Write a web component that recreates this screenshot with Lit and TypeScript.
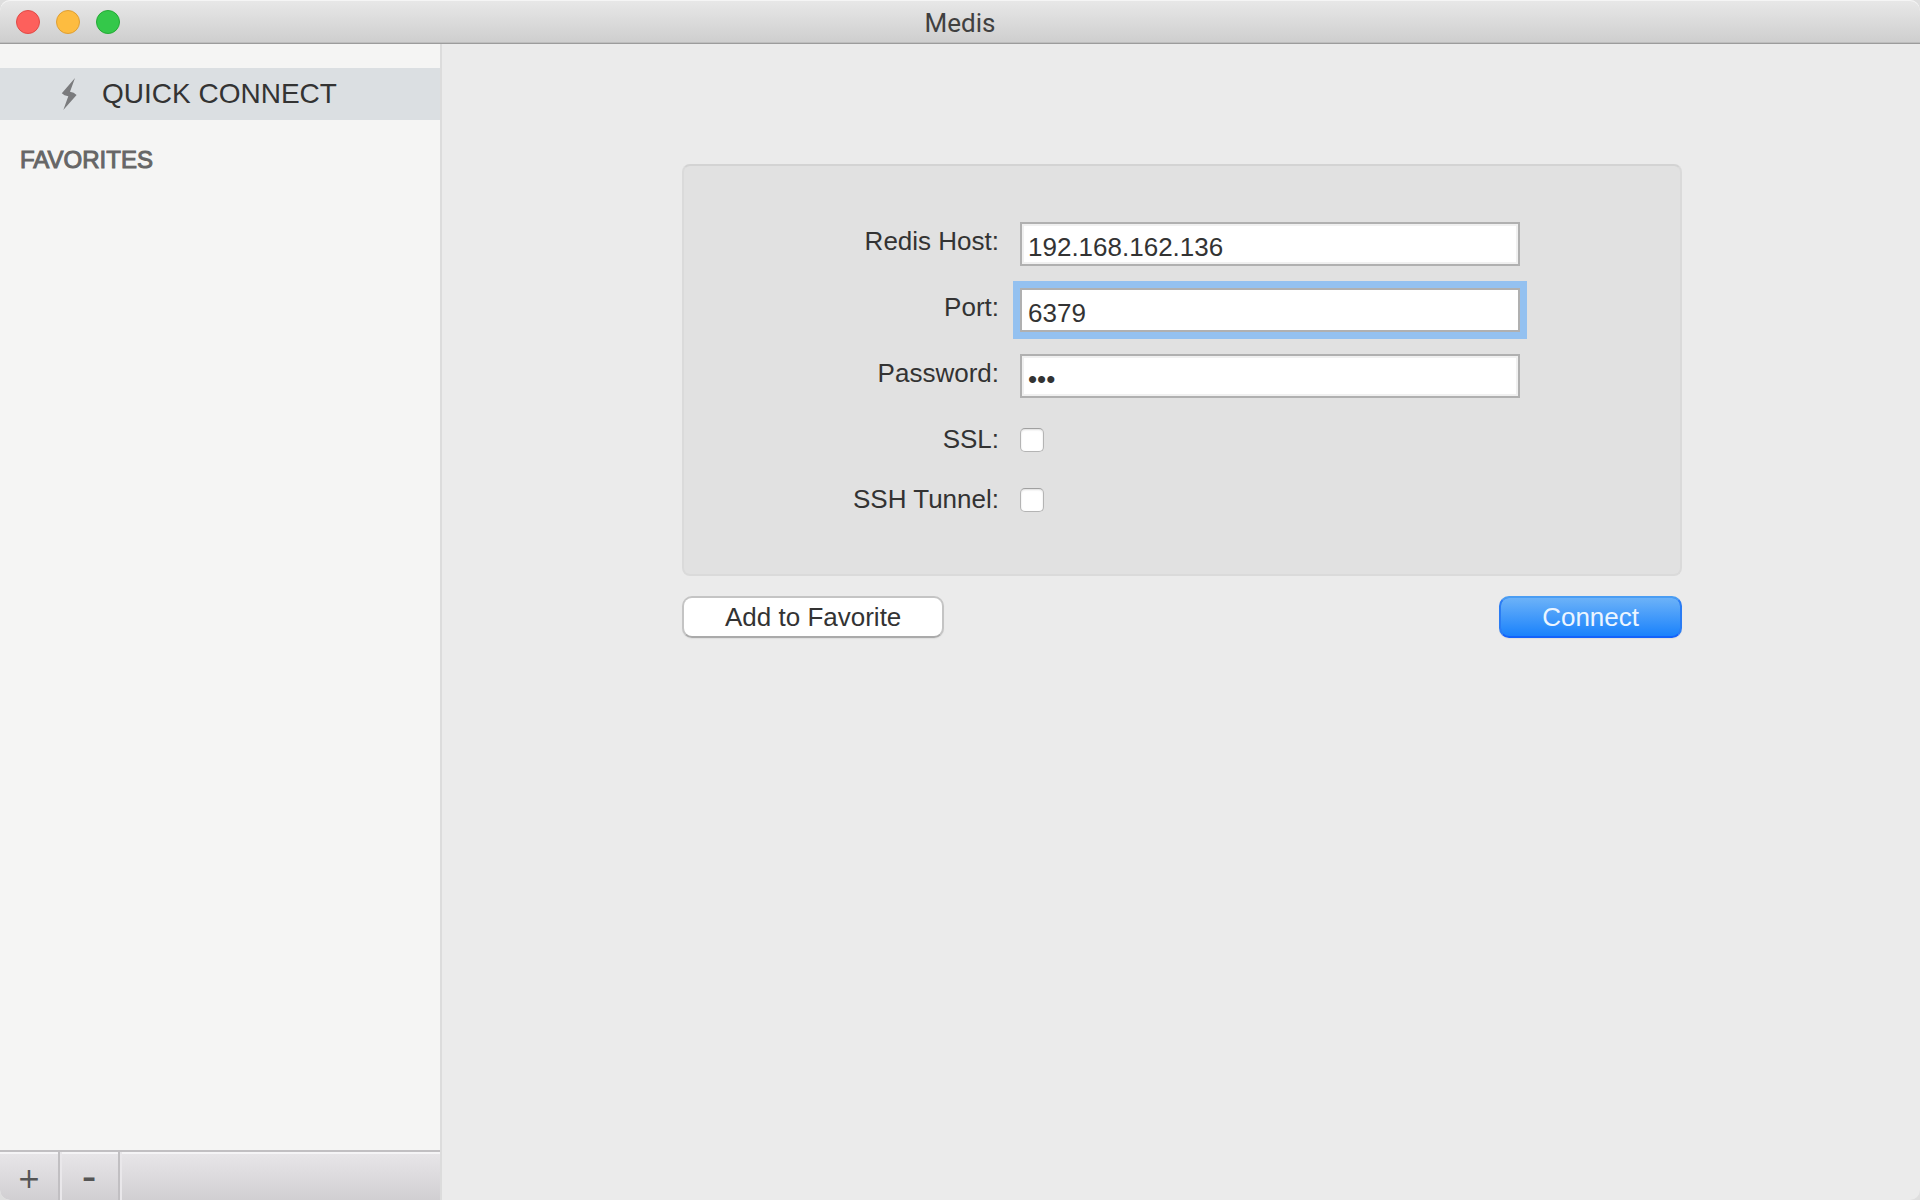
import { LitElement, html, css } from "lit";
import { customElement, property, state } from "lit/decorators.js";
import { classMap } from "lit/directives/class-map.js";

@customElement("title-bar")
class TitleBar extends LitElement {
  @property() label = "";

  static styles = css`
    :host {
      display: block;
    }
    .bar {
      box-sizing: border-box;
      height: 44px;
      display: grid;
      grid-template-columns: 1fr auto 1fr;
      align-items: center;
      padding: 1px 16px 0;
      background: linear-gradient(#e8e8e8, #cecece);
      border-bottom: 1px solid #9c9c9c;
      box-shadow: inset 0 1px #f5f5f5, inset 0 -1px #bdbdbd;
      border-radius: 10px 10px 0 0;
    }
    .lights {
      display: flex;
      gap: 16px;
    }
    .light {
      box-sizing: border-box;
      width: 24px;
      height: 24px;
      padding: 0;
      border: 1px solid;
      border-radius: 50%;
    }
    .close {
      background: #fd605c;
      border-color: #e14a46;
    }
    .minimize {
      background: #fdbc40;
      border-color: #df9f33;
    }
    .zoom {
      background: #34c84a;
      border-color: #24aa35;
    }
    .title {
      margin: 0;
      padding-top: 2px;
      font: 400 26px/30px Roboto, sans-serif;
      color: #404040;
    }
  `;

  render() {
    return html`
      <header class="bar">
        <div class="lights">
          <button class="light close" aria-label="Close"></button>
          <button class="light minimize" aria-label="Minimize"></button>
          <button class="light zoom" aria-label="Zoom"></button>
        </div>
        <h1 class="title">${this.label}</h1>
      </header>
    `;
  }
}

@customElement("side-bar")
class SideBar extends LitElement {
  static styles = css`
    :host {
      display: flex;
      flex-direction: column;
      background: #f5f5f4;
      border-right: 2px solid #dcdcdc;
      border-bottom-left-radius: 10px;
      overflow: hidden;
    }
    .nav {
      flex: 1;
      padding-top: 24px;
    }
    .item {
      display: flex;
      align-items: center;
      height: 52px;
      padding-left: 60px;
      gap: 24px;
      background: #dbdfe2;
      color: #333;
      font-size: 28px;
      line-height: 32px;
      text-decoration: none;
    }
    .bolt {
      width: 18px;
      height: 34px;
      fill: #7a7b7d;
    }
    .heading {
      margin: 0;
      padding: 26px 20px;
      color: #666;
      font-size: 24px;
      font-weight: 400;
      line-height: 28px;
      -webkit-text-stroke: 1px #666;
    }
    .tools {
      display: flex;
      height: 48px;
      border-top: 2px solid #c1bfc2;
      background: linear-gradient(#e8e6e9, #d1cfd2);
      box-shadow: inset 0 2px #f5f4f6;
    }
    .tool {
      box-sizing: border-box;
      width: 60px;
      padding: 6px 0 0;
      border: 0;
      border-right: 2px solid #c1bfc2;
      background: none;
      color: #555;
      font: 28px/40px "DejaVu Sans", sans-serif;
    }
    .tool + .tool {
      box-shadow: inset 2px 0 #e9e7ea;
    }
    .minus {
      font: 44px/40px "Liberation Sans", Arial, sans-serif;
      padding: 0;
    }
    .fill {
      flex: 1;
      box-shadow: inset 2px 0 #e9e7ea;
    }
  `;

  render() {
    return html`
      <nav class="nav">
        <a class="item" href="#quick-connect" aria-current="page">
          <svg class="bolt" viewBox="0 0 18 34" aria-hidden="true">
            <path d="M15 1 1.8 16.2Q4 18.6 8.3 19.2L3.3 33 16.6 18Q14 15.4 10 14.8Z" />
          </svg>
          <span>QUICK CONNECT</span>
        </a>
        <h2 class="heading">FAVORITES</h2>
      </nav>
      <footer class="tools">
        <button class="tool" aria-label="Add favorite">+</button>
        <button class="tool minus" aria-label="Remove favorite">-</button>
        <span class="fill"></span>
      </footer>
    `;
  }
}

interface Field {
  id: string;
  label: string;
  type: "text" | "password" | "checkbox";
  value?: string;
}

const FIELDS: Field[] = [
  { id: "host", label: "Redis Host:", type: "text", value: "192.168.162.136" },
  { id: "port", label: "Port:", type: "text", value: "6379" },
  { id: "password", label: "Password:", type: "password", value: "abc" },
  { id: "ssl", label: "SSL:", type: "checkbox" },
  { id: "ssh", label: "SSH Tunnel:", type: "checkbox" },
];

@customElement("connection-form")
class ConnectionForm extends LitElement {
  @state() private active = "port";

  static styles = css`
    :host {
      display: block;
      max-width: 1000px;
      margin: 0 auto;
      color: #333;
      font-size: 26px;
      line-height: 30px;
    }
    .panel {
      display: flex;
      flex-direction: column;
      gap: 22px;
      padding: 56px 160px 56px 0;
      background: #e1e1e1;
      border: 2px solid #dadada;
      border-top-color: #d3d3d3;
      border-radius: 8px;
    }
    .row {
      display: grid;
      grid-template-columns: 1fr minmax(0, 500px);
      column-gap: 21px;
      align-items: start;
    }
    .label {
      padding: 4px 0;
      text-align: right;
    }
    .text {
      box-sizing: border-box;
      width: 100%;
      height: 44px;
      margin: 0;
      padding: 6px 6px 0;
      border: 2px solid #b0b0b0;
      border-radius: 0;
      background: #fff;
      box-shadow: inset 0 0 0 2px #f0f0f0;
      color: #333;
      font: inherit;
      outline: none;
    }
    .text.active {
      box-shadow: 0 0 0 7px #94c1f0;
    }
    .check {
      appearance: none;
      box-sizing: border-box;
      width: 24px;
      height: 24px;
      margin: 8px 0 0;
      border: 1px solid #b4b4b4;
      border-top-color: #a0a0a0;
      border-radius: 5px;
      background: #fff;
      box-shadow: inset 0 1px 2px #ddd;
    }
    .check:checked {
      background: #1a82fb;
    }
    .actions {
      display: flex;
      justify-content: space-between;
      margin-top: 20px;
    }
    .button {
      box-sizing: border-box;
      height: 42px;
      padding: 0 41px;
      border: 2px solid #c4c4c4;
      border-bottom-color: #aaa;
      border-radius: 10px;
      background: #fff;
      box-shadow: 0 1px 1px #dedede;
      color: #333;
      font: inherit;
    }
    .primary {
      border-color: #4a9df3 #2a7cf4 #1262fa;
      background: linear-gradient(#6cb2f8, #1a82fc) padding-box, #2a7cf4;
      color: #ecf5ff;
    }
  `;

  private renderControl(field: Field) {
    if (field.type === "checkbox") {
      return html`<input class="check" id=${field.id} type="checkbox" />`;
    }
    return html`<input
      class=${classMap({ text: true, active: this.active === field.id })}
      id=${field.id}
      type=${field.type}
      .value=${field.value ?? ""}
      @focus=${() => (this.active = field.id)}
    />`;
  }

  render() {
    return html`
      <form @submit=${(event: Event) => event.preventDefault()}>
        <div class="panel">
          ${FIELDS.map(
            (field) => html`
              <div class="row">
                <label class="label" for=${field.id}>${field.label}</label>
                ${this.renderControl(field)}
              </div>
            `
          )}
        </div>
        <div class="actions">
          <button class="button" type="button">Add to Favorite</button>
          <button class="button primary" type="submit">Connect</button>
        </div>
      </form>
    `;
  }
}

@customElement("app-root")
class AppRoot extends LitElement {
  static styles = css`
    :host {
      display: flex;
      flex-direction: column;
      min-height: 100vh;
      background: #dedede;
      font-family: "Liberation Sans", Arial, sans-serif;
    }
    .body {
      flex: 1;
      display: grid;
      grid-template-columns: 442px 1fr;
    }
    .main {
      padding: 120px 40px 40px 42px;
      background: #ebebeb;
      border-bottom-right-radius: 10px;
    }
  `;

  render() {
    return html`
      <title-bar label="Medis"></title-bar>
      <div class="body">
        <side-bar></side-bar>
        <main class="main"><connection-form></connection-form></main>
      </div>
    `;
  }
}
